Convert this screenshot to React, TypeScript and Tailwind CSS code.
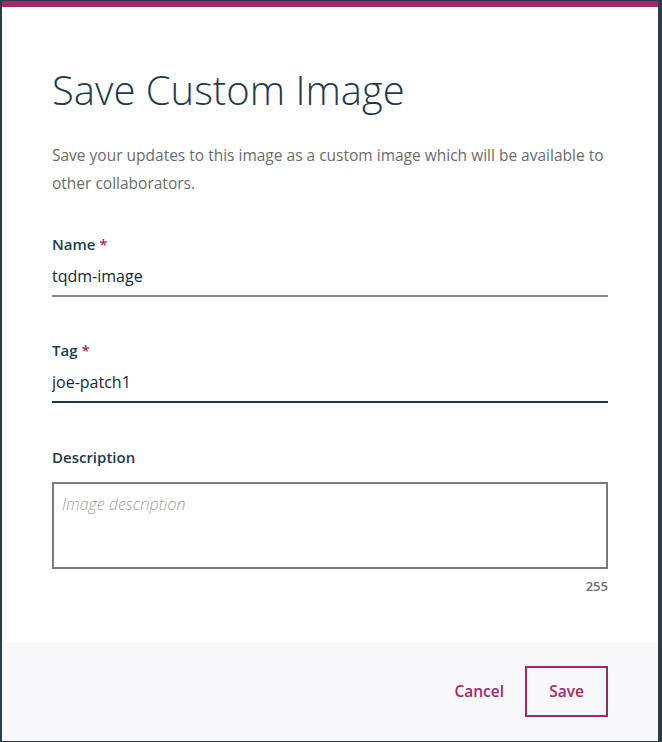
import { useState } from 'react';

const MAGENTA = '#a4276d';

function Field({
  label,
  value,
  focused,
  onChange,
}: {
  label: string;
  value: string;
  focused?: boolean;
  onChange: (v: string) => void;
}) {
  return (
    <div className="flex flex-col">
      <label className="text-[15px] font-semibold leading-[20px] text-[#1d3a52]">
        {label} <span className="text-[#a4276d]">*</span>
      </label>
      <input
        type="text"
        value={value}
        onChange={(e) => onChange(e.target.value)}
        className={`mt-[10px] border-b-2 bg-transparent pb-[7px] text-[16px] leading-[24px] text-[#152935] outline-none ${
          focused ? 'border-[#1d3649]' : 'border-[#8a8a8a]'
        }`}
      />
    </div>
  );
}

export default function App() {
  const [name, setName] = useState('tqdm-image');
  const [tag, setTag] = useState('joe-patch1');
  const [desc, setDesc] = useState('');

  return (
    <div
      className="h-[742px] w-[662px] bg-[#2a3c49] pl-[2px] pt-[1px]"
      style={{ fontFamily: '"Open Sans", "Liberation Sans", sans-serif' }}
    >
      <div className="flex h-[740px] w-[656px] flex-col border-t-[6px] border-[#a4276d] bg-white">

        {/* Body */}
        <div className="flex flex-1 flex-col px-[50px] pt-[59px]">
          <h1 className="text-[40px] font-light leading-[48px] text-[#1f3a52]">
            Save Custom Image
          </h1>
          <p className="mt-[27px] text-[15.5px] leading-[28px] text-[#6b6b6b]">
            Save your updates to this image as a custom image which will be available to other
            collaborators.
          </p>

          <div className="mt-[37px]">
            <Field label="Name" value={name} onChange={setName} />
          </div>
          <div className="mt-[43px]">
            <Field label="Tag" value={tag} onChange={setTag} focused />
          </div>

          {/* Description */}
          <label className="mt-[44px] text-[15px] font-semibold leading-[20px] text-[#1d3a52]">
            Description
          </label>
          <textarea
            value={desc}
            onChange={(e) => setDesc(e.target.value)}
            placeholder="Image description"
            className="mt-[15px] h-[87px] resize-none border-2 border-[#7a7a7a] px-[8px] pt-[8px] text-[16px] leading-[24px] text-[#152935] outline-none placeholder:font-light placeholder:italic placeholder:text-[#a0a0a0]"
          />
          <p className="mt-[9px] text-right text-[13px] font-semibold leading-[16px] text-[#707070]">
            255
          </p>
        </div>

        {/* Footer */}
        <div className="flex h-[99px] items-start justify-end gap-[21px] bg-[#f8f8fa] pr-[50px] pt-[24px]">
          <button
            type="button"
            className="flex h-[51px] items-center text-[15.5px] font-semibold"
            style={{ color: MAGENTA }}
          >
            Cancel
          </button>
          <button
            type="button"
            className="flex h-[51px] w-[83px] items-center justify-center border-2 border-[#a4276d] text-[15.5px] font-semibold text-[#a4276d]"
          >
            Save
          </button>
        </div>
      </div>
    </div>
  );
}
